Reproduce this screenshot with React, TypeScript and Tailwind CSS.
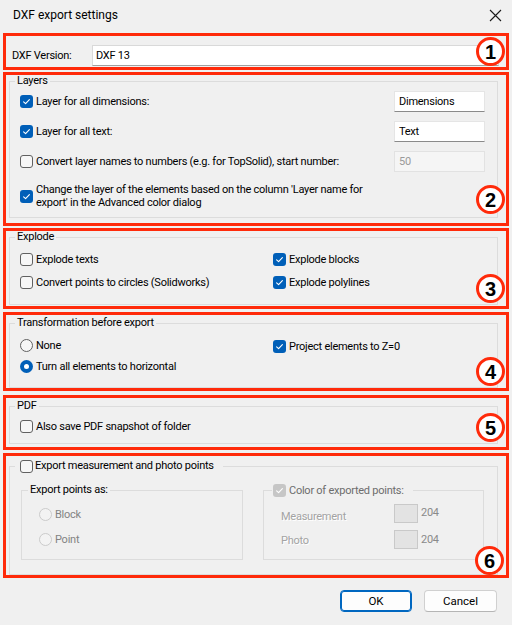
import React from "react";

const RED = "border-[#ff2a0a]";

function Check({ checked, disabled }: { checked?: boolean; disabled?: boolean }) {
  if (checked) {
    return (
      <span
        className={`w-[13px] h-[13px] shrink-0 rounded-[3px] flex items-center justify-center ${
          disabled ? "bg-[#c6c6c6]" : "bg-[#005fb8]"
        }`}
      >
        <svg width="13" height="13" viewBox="0 0 13 13">
          <path d="M3.6 6.8 L5.6 8.7 L9.4 4.6" fill="none" stroke="#ffffff" strokeWidth="1.1" strokeLinecap="round" strokeLinejoin="round" />
        </svg>
      </span>
    );
  }
  return (
    <span
      className={`w-[13px] h-[13px] shrink-0 rounded-[3px] border ${
        disabled ? "border-[#c6c6c6] bg-[#f5f5f5]" : "border-[#616161] bg-[#f7f7f7]"
      }`}
    />
  );
}

function Radio({ checked, disabled }: { checked?: boolean; disabled?: boolean }) {
  if (checked) {
    return (
      <span className="w-[13px] h-[13px] shrink-0 rounded-full bg-[#005fb8] flex items-center justify-center">
        <span className="w-[5px] h-[5px] rounded-full bg-white" />
      </span>
    );
  }
  return (
    <span
      className={`w-[13px] h-[13px] shrink-0 rounded-full border ${
        disabled ? "border-[#cbcbcb] bg-[#f3f3f3]" : "border-[#616161] bg-[#f7f7f7]"
      }`}
    />
  );
}

function Badge({ n, cls }: { n: string; cls: string }) {
  return (
    <div
      className={`absolute ${cls} w-[29px] h-[29px] rounded-full border-[3px] ${RED} bg-white flex items-center justify-center text-[20px] font-bold text-black leading-none tracking-normal [font-family:Arial,sans-serif]`}
    >
      {n}
    </div>
  );
}

function TextInput({ value, w }: { value: string; w: string }) {
  return (
    <div
      className={`${w} h-[21px] bg-white border border-[#e5e5e5] border-b-[#8a8a8a] flex items-center pl-[4px] text-black`}
    >
      {value}
    </div>
  );
}

export default function App() {
  return (
    <div className="w-[512px] h-[625px] bg-[#f0f0f0] flex flex-col text-[11px] tracking-[-0.25px] text-black [font-family:Roboto,sans-serif] leading-[13px] overflow-hidden">
      {/* Title bar */}
      <div className="h-[33px] flex items-center justify-between pl-[13px] pr-[9px] pb-[3px]">
        <span className="text-[12px] tracking-normal">DXF export settings</span>
        <svg width="13" height="13" viewBox="0 0 13 13" className="mr-[1px]">
          <path d="M1 1 L12 12 M12 1 L1 12" stroke="#1a1a1a" strokeWidth="1.1" />
        </svg>
      </div>

      {/* 1 */}
      <div className={`mx-[3px] h-[37px] border-[3px] ${RED} relative flex items-start pt-[9px] pl-[6px]`}>
        <div className="w-[80px] h-[21px] flex items-center">DXF Version:</div>
        <div className="w-[407px] h-[21px] bg-white border border-[#d9d9d9] border-b-[#a0a0a0] flex items-center pl-[3px]">
          DXF 13
        </div>
        <Badge n="1" cls="right-[1px] top-[1px]" />
      </div>

      {/* 2 */}
      <div className={`mx-[3px] mt-[2px] h-[154px] border-[3px] ${RED} relative`}>
        <fieldset className="ml-[3px] w-[489px] h-[143px] border border-[#dcdcdc] p-0">
          <legend className="ml-[5px] px-[2px] leading-[12px]">Layers</legend>
          <div className="pl-[10px] pr-[12px] pt-[3px]">
            <div className="h-[22px] flex items-center justify-between">
              <div className="flex items-center gap-[3px]">
                <Check checked />
                <span>Layer for all dimensions:</span>
              </div>
              <TextInput value="Dimensions" w="w-[91px]" />
            </div>
            <div className="h-[22px] mt-[8px] flex items-center justify-between">
              <div className="flex items-center gap-[3px]">
                <Check checked />
                <span>Layer for all text:</span>
              </div>
              <TextInput value="Text" w="w-[91px]" />
            </div>
            <div className="h-[22px] mt-[8px] flex items-center justify-between">
              <div className="flex items-center gap-[3px]">
                <Check />
                <span>Convert layer names to numbers (e.g. for TopSolid), start number:</span>
              </div>
              <div className="w-[91px] h-[21px] bg-[#f5f5f5] border border-[#e2e2e2] flex items-center pl-[4px] text-[#9a9a9a]">
                50
              </div>
            </div>
            <div className="mt-[11px] flex items-center gap-[3px]">
              <Check checked />
              <span className="leading-[13px]">
                Change the layer of the elements based on the column 'Layer name for
                <br />
                export' in the Advanced color dialog
              </span>
            </div>
          </div>
        </fieldset>
        <Badge n="2" cls="right-[1px] bottom-[9px]" />
      </div>

      {/* 3 */}
      <div className={`mx-[3px] mt-[2px] h-[81px] border-[3px] ${RED} relative`}>
        <fieldset className="ml-[3px] w-[489px] h-[74px] border border-[#dcdcdc] p-0">
          <legend className="ml-[5px] px-[2px] leading-[12px]">Explode</legend>
          <div className="flex pl-[10px] pt-[8px]">
            <div className="w-[253px] flex flex-col gap-[7px]">
              <div className="h-[16px] flex items-center gap-[3px]">
                <Check />
                <span>Explode texts</span>
              </div>
              <div className="h-[16px] flex items-center gap-[3px]">
                <Check />
                <span>Convert points to circles (Solidworks)</span>
              </div>
            </div>
            <div className="flex flex-col gap-[7px]">
              <div className="h-[16px] flex items-center gap-[3px]">
                <Check checked />
                <span>Explode blocks</span>
              </div>
              <div className="h-[16px] flex items-center gap-[3px]">
                <Check checked />
                <span>Explode polylines</span>
              </div>
            </div>
          </div>
        </fieldset>
        <Badge n="3" cls="right-[1px] bottom-[3px]" />
      </div>

      {/* 4 */}
      <div className={`mx-[3px] mt-[3px] h-[79px] border-[3px] ${RED} relative`}>
        <fieldset className="ml-[3px] mt-[2px] w-[489px] h-[71px] border border-[#dcdcdc] p-0">
          <legend className="ml-[5px] px-[2px] leading-[12px]">Transformation before export</legend>
          <div className="flex pl-[10px] pt-[8px]">
            <div className="w-[253px] flex flex-col gap-[5px]">
              <div className="h-[16px] flex items-center gap-[3px]">
                <Radio />
                <span>None</span>
              </div>
              <div className="h-[16px] flex items-center gap-[3px]">
                <Radio checked />
                <span>Turn all elements to horizontal</span>
              </div>
            </div>
            <div className="pt-[1px]">
              <div className="h-[16px] flex items-center gap-[3px]">
                <Check checked />
                <span>Project elements to Z=0</span>
              </div>
            </div>
          </div>
        </fieldset>
        <Badge n="4" cls="right-[1px] bottom-[2px]" />
      </div>

      {/* 5 */}
      <div className={`mx-[3px] mt-[4px] h-[55px] border-[3px] ${RED} relative`}>
        <fieldset className="ml-[3px] mt-[2px] w-[489px] h-[44px] border border-[#dcdcdc] p-0">
          <legend className="ml-[5px] px-[2px] leading-[12px]">PDF</legend>
          <div className="pl-[10px] pt-[6px]">
            <div className="h-[16px] flex items-center gap-[3px]">
              <Check />
              <span>Also save PDF snapshot of folder</span>
            </div>
          </div>
        </fieldset>
        <Badge n="5" cls="right-[1px] bottom-[5px]" />
      </div>

      {/* 6 */}
      <div className={`mx-[3px] mt-[3px] h-[125px] border-[3px] ${RED} relative`}>
        <fieldset className="ml-[3px] mt-[3px] w-[489px] h-[116px] border border-[#dcdcdc] p-0">
          <legend className="ml-[5px] pl-[5px] pr-[9px] leading-[14px]">
            <span className="flex items-center gap-[2px]">
              <Check />
              <span>Export measurement and photo points</span>
            </span>
          </legend>
          <div className="flex gap-[20px] pl-[11px] pt-[11px]">
            <fieldset className="w-[222px] h-[76px] border border-[#dcdcdc] p-0">
              <legend className="ml-[6px] px-[2px] leading-[12px]">Export points as:</legend>
              <div className="flex flex-col gap-[9px] text-[#838383] pl-[17px] pt-[10px]">
                <div className="h-[16px] flex items-center gap-[3px]">
                  <Radio disabled />
                  <span>Block</span>
                </div>
                <div className="h-[16px] flex items-center gap-[3px]">
                  <Radio disabled />
                  <span>Point</span>
                </div>
              </div>
            </fieldset>
            <fieldset className="w-[221px] h-[76px] border border-[#dcdcdc] p-0">
              <legend className="ml-[8px] pl-[1px] pr-[9px] leading-[12px]">
                <span className="flex items-center gap-[3px] text-[#6d6d6d]">
                  <Check checked disabled />
                  <span>Color of exported points:</span>
                </span>
              </legend>
              <div className="flex flex-col gap-[7px] pl-[17px] pt-[7px]">
                <div className="h-[19px] flex items-center">
                  <span className="w-[113px] text-[#a3a3a3] [text-shadow:1px_1px_0_#ffffff] pt-[5px]">Measurement</span>
                  <span className="w-[24px] h-[19px] bg-[#e3e3e3] border border-[#c9c9c9]" />
                  <span className="ml-[3px] text-[#8a8a8a] pb-[3px]">204</span>
                </div>
                <div className="h-[19px] flex items-center">
                  <span className="w-[113px] text-[#a3a3a3] [text-shadow:1px_1px_0_#ffffff] pt-[1px]">Photo</span>
                  <span className="w-[24px] h-[19px] bg-[#e3e3e3] border border-[#c9c9c9]" />
                  <span className="ml-[3px] text-[#8a8a8a]">204</span>
                </div>
              </div>
            </fieldset>
          </div>
        </fieldset>
        <Badge n="6" cls="right-[2px] bottom-[0px]" />
      </div>

      {/* Buttons */}
      <div className="mt-[12px] flex justify-end gap-[12px] pr-[15px]">
        <button className="w-[72px] h-[22px] rounded-[4px] bg-[#fdfdfd] border border-[#0067c0] shadow-[inset_0_0_0_1px_#0067c0] flex items-center justify-center text-[11.5px] tracking-normal">
          OK
        </button>
        <button className="w-[73px] h-[22px] rounded-[4px] bg-[#fdfdfd] border border-[#d0d0d0] border-b-[#b5b5b5] flex items-center justify-center text-[11.5px] tracking-normal">
          Cancel
        </button>
      </div>
    </div>
  );
}
